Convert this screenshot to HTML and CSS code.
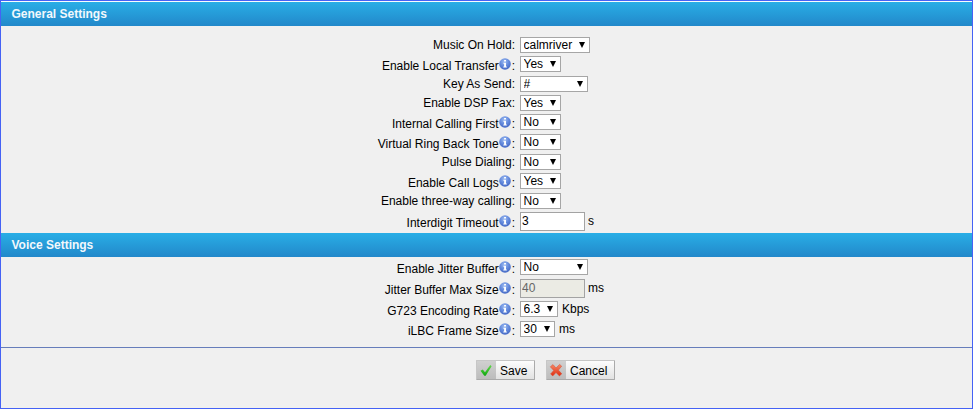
FILE: index.html
```html
<!DOCTYPE html>
<html lang="en">
<head>
<meta charset="utf-8">
<title>General Settings</title>
<link rel="stylesheet" href="styles.css">
</head>
<body>
<svg width="0" height="0" class="defs">
  <defs>
    <radialGradient id="ball" cx="45%" cy="30%" r="70%"><stop offset="0" stop-color="#9dbcf2"/><stop offset=".55" stop-color="#6389dc"/><stop offset="1" stop-color="#4468c4"/></radialGradient>
    <linearGradient id="green" x1="0" y1="0" x2="0" y2="1"><stop offset="0" stop-color="#62d84a"/><stop offset="1" stop-color="#10a810"/></linearGradient>
    <linearGradient id="red" x1="0" y1="0" x2="0" y2="1"><stop offset="0" stop-color="#f58a68"/><stop offset="1" stop-color="#e02c10"/></linearGradient>
    <symbol id="info" viewBox="0 0 12 12"><circle cx="6" cy="6" r="5.8" fill="url(#ball)"/><path d="M5.1 2h1.9v1.6H5.1zM4.4 4.7H7v3.7h.8v1.1H4.3V8.4h.8V5.8h-.7z" fill="#fff"/></symbol>
  </defs>
</svg>
<main class="panel">
  <h2 class="band">General Settings</h2>
  <form class="fields general">
    <label>Music On Hold:</label><div class="control"><span class="pick river"><select><option>calmriver</option></select></span></div>
    <label class="tip">Enable Local Transfer<svg><use href="#info"/></svg>:</label><div class="control"><span class="pick"><select><option>Yes</option></select></span></div>
    <label>Key As Send:</label><div class="control"><span class="pick wide"><select><option>#</option></select></span></div>
    <label>Enable DSP Fax:</label><div class="control"><span class="pick"><select><option>Yes</option></select></span></div>
    <label class="tip">Internal Calling First<svg><use href="#info"/></svg>:</label><div class="control"><span class="pick"><select><option>No</option></select></span></div>
    <label class="tip">Virtual Ring Back Tone<svg><use href="#info"/></svg>:</label><div class="control"><span class="pick"><select><option>No</option></select></span></div>
    <label>Pulse Dialing:</label><div class="control"><span class="pick"><select><option>No</option></select></span></div>
    <label class="tip">Enable Call Logs<svg><use href="#info"/></svg>:</label><div class="control"><span class="pick"><select><option>Yes</option></select></span></div>
    <label>Enable three-way calling:</label><div class="control"><span class="pick"><select><option>No</option></select></span></div>
    <label class="tip low">Interdigit Timeout<svg><use href="#info"/></svg>:</label><div class="control"><input type="text" value="3"><span class="unit">s</span></div>
  </form>
  <h2 class="band">Voice Settings</h2>
  <form class="fields voice">
    <label class="tip">Enable Jitter Buffer<svg><use href="#info"/></svg>:</label><div class="control"><span class="pick wide"><select><option>No</option></select></span></div>
    <label class="tip low">Jitter Buffer Max Size<svg><use href="#info"/></svg>:</label><div class="control"><input type="text" value="40" disabled><span class="unit">ms</span></div>
    <label class="tip">G723 Encoding Rate<svg><use href="#info"/></svg>:</label><div class="control"><span class="pick rate"><select><option>6.3</option></select></span><span class="unit">Kbps</span></div>
    <label class="tip">iLBC Frame Size<svg><use href="#info"/></svg>:</label><div class="control"><span class="pick frame"><select><option>30</option></select></span><span class="unit">ms</span></div>
  </form>
  <div class="actions">
    <button class="save"><span class="mark"><svg viewBox="0 0 20 20"><path d="M4.5 10.8 6.8 9.6 9 12.2 14.3 5 15.6 6.2 9.7 15.8H8.3Z" fill="url(#green)"/></svg></span><span class="caption">Save</span></button>
    <button class="cancel"><span class="mark"><svg viewBox="0 0 20 20"><path d="M4.3 6.8 7 4.6 10 8 13.6 4.4 15.7 6.2 12.4 10.1 15.8 13.8 13.4 15.9 10 12.6 6.8 15.9 4.6 14 7.7 10.4Z" fill="url(#red)" stroke="#d84a30" stroke-width=".5"/></svg></span><span class="caption">Cancel</span></button>
  </div>
</main>
</body>
</html>
```
FILE: styles.css
```css
* { box-sizing: border-box; }
body { margin: 0; font: 12px/16px "Liberation Sans", Arial, sans-serif; color: #000; }
.defs { position: absolute; }
.panel { height: 409px; border: 1px solid #4562f5; padding-top: 1px; background: #f0f0f0; box-shadow: inset 0 1px #f8fcff; }
.band { height: 24px; margin: 0; padding-left: 10.5px; font-size: 12px; line-height: 24px; color: #f2f8fc; background: linear-gradient(#29aee6, #2288ca); }
.fields { display: grid; grid-template-columns: 514px 1fr; column-gap: 5px; align-items: start; }
.general { padding-top: 11px; grid-template-rows: 19px 20px 19px 19px 20px 20px 19px 20px 19px 21px; }
.voice { padding-top: 2px; grid-template-rows: 20px 22px 20px 26px; }
label { text-align: right; white-space: nowrap; }
.tip { padding-top: 1.5px; }
.low { padding-top: 2.5px; }
.tip svg { position: relative; top: 0; width: 12px; height: 12px; margin: -4px 1px 0 0; vertical-align: 0; }
.control { display: flex; white-space: nowrap; }
.pick { position: relative; width: 41px; height: 16px; }
.pick::after { content: ""; position: absolute; right: 5px; top: 5px; border: solid transparent; border-width: 6px 3.5px 0; border-top-color: #000; }
.river { width: 70px; }
.wide { width: 68px; }
.rate { width: 38px; }
.frame { width: 35px; }
select { appearance: none; display: block; width: 100%; height: 16px; margin: 0; padding: 0 0 0 2.5px; border: 1px solid #a6a6a6; border-radius: 0; background: #fff; font: 12px/14px "Liberation Sans", Arial, sans-serif; color: #000; }
input { width: 65px; height: 19px; margin: 0; padding: 0 0 2px 1px; border: 1px solid #a3a3a3; background: #fff; font: 12px/16px "Liberation Sans", Arial, sans-serif; color: #000; }
input:disabled { background: #ebebe4; color: #666; }
.unit { margin-left: 4px; }
input + .unit { margin-left: 3px; padding-top: 1px; }
.actions { display: flex; gap: 11px; border-top: 1px solid #667dbb; padding: 12px 0 0 475px; }
button { display: flex; height: 20px; padding: 0; border: 1px solid #c6c6c6; border-right-color: #aaa; border-bottom-color: #aaa; border-radius: 1px; background: linear-gradient(#fdfdfd, #e2e2e2); font: 12px/18px "Liberation Sans", Arial, sans-serif; color: #000; }
.save { width: 59px; }
.cancel { width: 69px; }
.mark { width: 19px; height: 18px; background: linear-gradient(#d0d0d0, #bcbcbc); }
.mark svg { display: block; width: 20px; height: 20px; margin: -1px; }
.caption { margin-left: 4px; padding-top: 1px; }
```
